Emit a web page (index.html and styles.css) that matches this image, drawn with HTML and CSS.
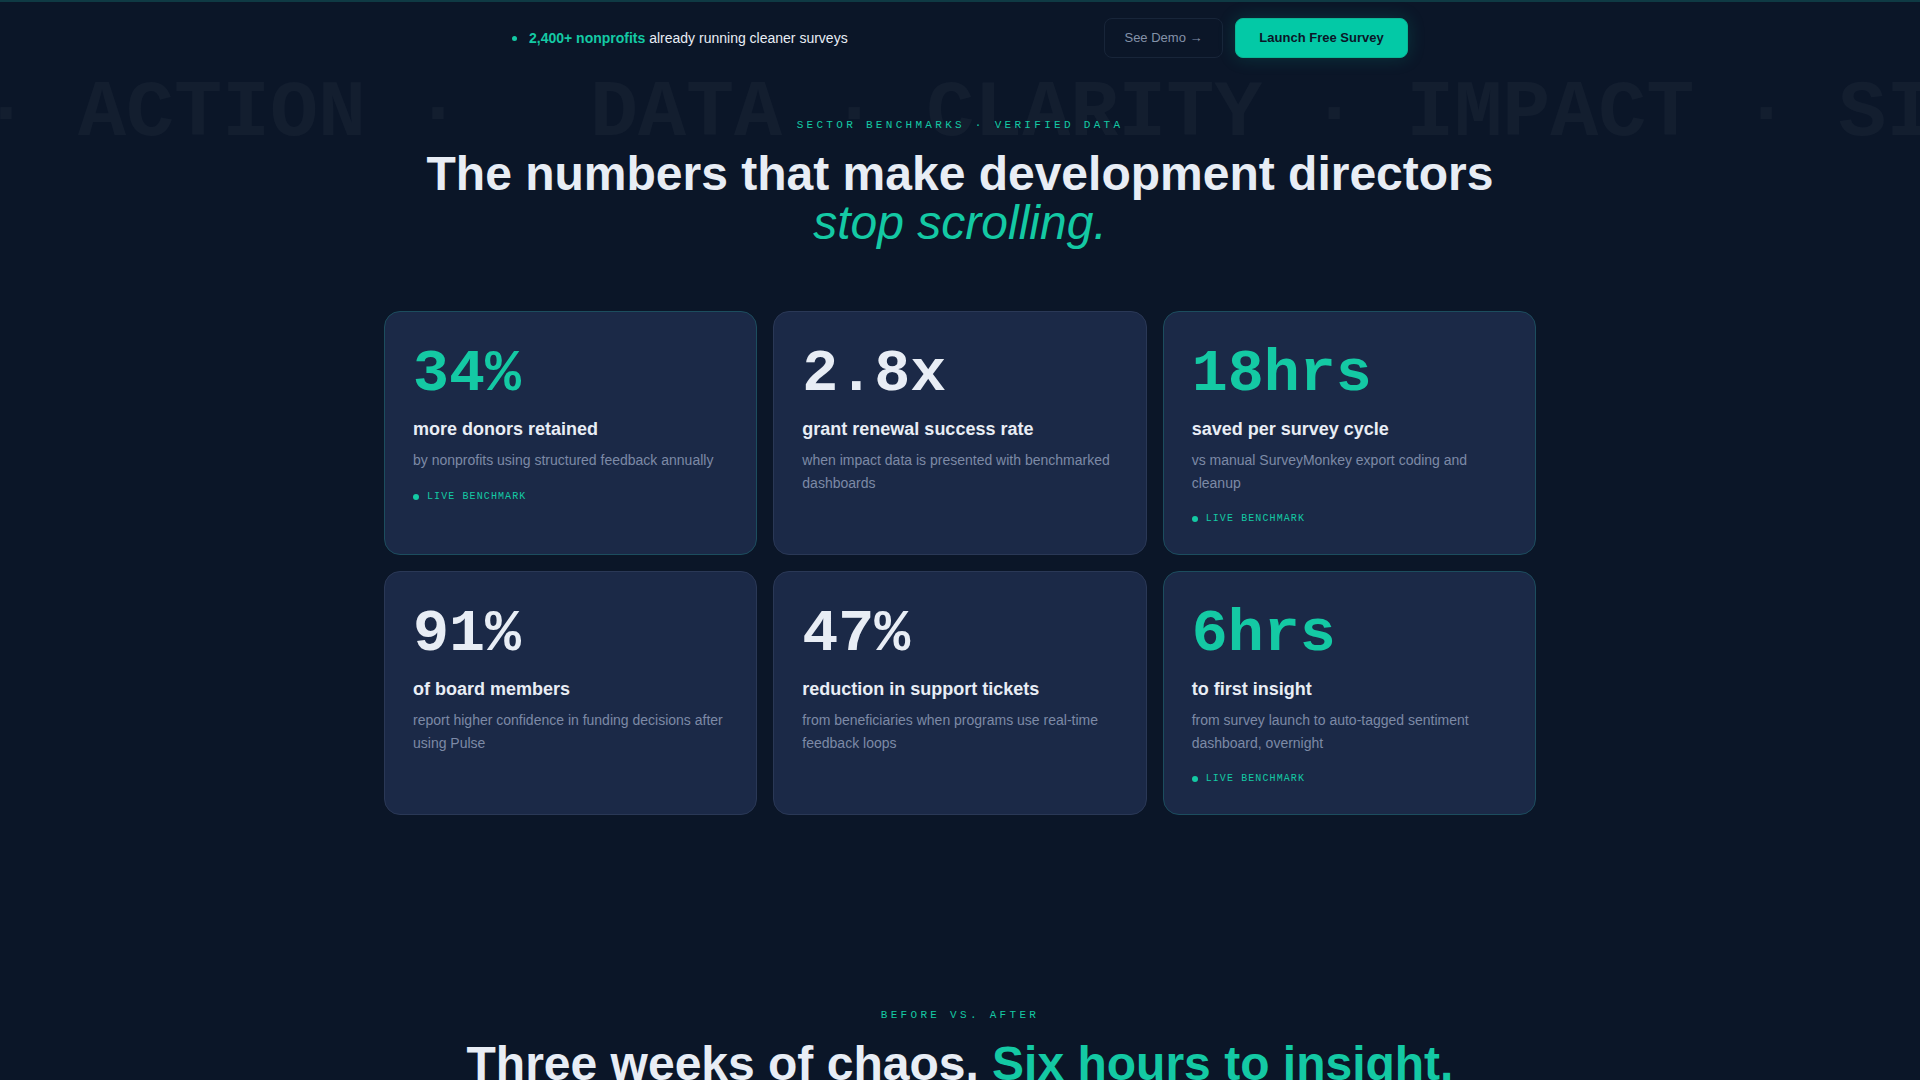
FILE: index.html
```html
<!DOCTYPE html>
<html>
  <head>
    <link rel="stylesheet" href="styles.css">
  </head>
  <body>
    <header class="topbar">
      <div class="topbar-inner">
        <div class="social-proof">
          <span class="pulse-dot"></span>
          <span><strong>2,400+ nonprofits</strong> already running cleaner surveys</span>
        </div>
        <div class="topbar-actions">
          <button class="btn btn-ghost">See Demo &rarr;</button>
          <button class="btn btn-primary">Launch Free Survey</button>
        </div>
      </div>
    </header>

    <section class="stats">
      <div class="marquee" aria-hidden="true">· ACTION · <span class="marquee-gap"></span>DATA · CLARITY · IMPACT · SIGNAL · VOICE</div>
      <div class="section-head">
        <div class="eyebrow">SECTOR BENCHMARKS · VERIFIED DATA</div>
        <h1 class="headline">The numbers that make development directors<br><em>stop scrolling.</em></h1>
      </div>

      <div class="stat-grid">
        <div class="stat-card is-live">
          <div class="stat-value">34%</div>
          <div class="stat-label">more donors retained</div>
          <p class="stat-desc">by nonprofits using structured feedback annually</p>
          <div class="live-tag"><span class="live-dot"></span>LIVE BENCHMARK</div>
        </div>
        <div class="stat-card">
          <div class="stat-value">2.8x</div>
          <div class="stat-label">grant renewal success rate</div>
          <p class="stat-desc">when impact data is presented with benchmarked dashboards</p>
        </div>
        <div class="stat-card is-live">
          <div class="stat-value">18hrs</div>
          <div class="stat-label">saved per survey cycle</div>
          <p class="stat-desc">vs manual SurveyMonkey export coding and cleanup</p>
          <div class="live-tag"><span class="live-dot"></span>LIVE BENCHMARK</div>
        </div>
        <div class="stat-card">
          <div class="stat-value">91%</div>
          <div class="stat-label">of board members</div>
          <p class="stat-desc">report higher confidence in funding decisions after using Pulse</p>
        </div>
        <div class="stat-card">
          <div class="stat-value">47%</div>
          <div class="stat-label">reduction in support tickets</div>
          <p class="stat-desc">from beneficiaries when programs use real-time feedback loops</p>
        </div>
        <div class="stat-card is-live">
          <div class="stat-value">6hrs</div>
          <div class="stat-label">to first insight</div>
          <p class="stat-desc">from survey launch to auto-tagged sentiment dashboard, overnight</p>
          <div class="live-tag"><span class="live-dot"></span>LIVE BENCHMARK</div>
        </div>
      </div>
    </section>

    <section class="compare">
      <div class="section-head">
        <div class="eyebrow">BEFORE VS. AFTER</div>
        <h2 class="headline">Three weeks of chaos. <span class="accent">Six hours to insight.</span></h2>
      </div>
    </section>
  </body>
</html>
```

FILE: styles.css
```css
* {
  box-sizing: border-box;
}
html,
body {
  margin: 0;
  background: #0b1628;
}
body {
  font-family: "Liberation Sans", Arial, sans-serif;
  color: #e8edf5;
  border-top: 2px solid #0f3a44;
  overflow: hidden;
  height: 1080px;
}
.topbar {
  padding: 16px 0;
}
.topbar-inner {
  width: 896px;
  margin: 0 auto;
  display: flex;
  align-items: center;
  justify-content: space-between;
}
.social-proof {
  display: flex;
  align-items: center;
  gap: 12px;
  font-size: 14px;
  color: #e8edf5;
}
.social-proof strong {
  color: #14c9a4;
}
.pulse-dot {
  width: 5px;
  height: 5px;
  border-radius: 50%;
  background: #14c9a4;
}
.topbar-actions {
  display: flex;
  gap: 12px;
}
.btn {
  font-family: inherit;
  font-size: 13px;
  line-height: 16px;
  height: 40px;
  padding: 0;
  border-radius: 8px;
  white-space: nowrap;
  cursor: pointer;
}
.btn-ghost {
  background: transparent;
  color: #8492a8;
  border: 1px solid #182539;
  width: 119px;
}
.btn-primary {
  background: #03c9a6;
  color: #0b1628;
  font-weight: bold;
  border: 1px solid #0ab594;
  width: 173px;
  box-shadow: 0 0 18px rgba(0, 201, 167, 0.18);
}

.stats {
  position: relative;
  padding: 45px 0 0;
}
.marquee {
  position: absolute;
  top: 0;
  left: -18px;
  font-family: "Liberation Mono", monospace;
  font-weight: bold;
  font-size: 80px;
  line-height: 1;
  white-space: pre;
  color: rgba(255, 255, 255, 0.035);
  pointer-events: none;
}
.marquee-gap {
  display: inline-block;
  width: 80px;
}
.section-head {
  position: relative;
  text-align: center;
}
.eyebrow {
  font-family: "Liberation Mono", monospace;
  font-size: 11px;
  letter-spacing: 0.3em;
  color: #14c9a4;
  margin-bottom: 18px;
}
.headline {
  margin: 0;
  font-size: 48px;
  line-height: 1.03;
  font-weight: bold;
  color: #e8edf5;
}
.headline em {
  font-weight: normal;
  color: #14c9a4;
}
.headline .accent {
  color: #14c9a4;
}

.stat-grid {
  width: 1152px;
  margin: 63px auto 0;
  display: grid;
  grid-template-columns: repeat(3, 1fr);
  gap: 16px;
}
.stat-card {
  background: #1b2947;
  border: 1px solid #2a3856;
  border-radius: 16px;
  padding: 32px 28px 28px;
}
.stat-card.is-live {
  border-color: #1c4d5e;
}
.stat-value {
  font-family: "Liberation Mono", monospace;
  font-weight: bold;
  font-size: 60px;
  line-height: 1;
  color: #e8edf5;
}
.is-live .stat-value {
  color: #14c9a4;
}
.stat-label {
  margin-top: 14px;
  font-size: 18px;
  line-height: 1.3;
  font-weight: bold;
}
.stat-desc {
  margin: 8px 0 0;
  font-size: 14px;
  line-height: 1.6;
  color: #7d8aa6;
}
.live-tag {
  margin-top: 18px;
  display: flex;
  align-items: center;
  gap: 8px;
  font-family: "Liberation Mono", monospace;
  font-size: 10px;
  letter-spacing: 1.1px;
  line-height: 14px;
  color: #14c9a4;
}
.live-dot {
  width: 6px;
  height: 6px;
  border-radius: 50%;
  background: #14c9a4;
}

.compare {
  padding-top: 194px;
}
```
